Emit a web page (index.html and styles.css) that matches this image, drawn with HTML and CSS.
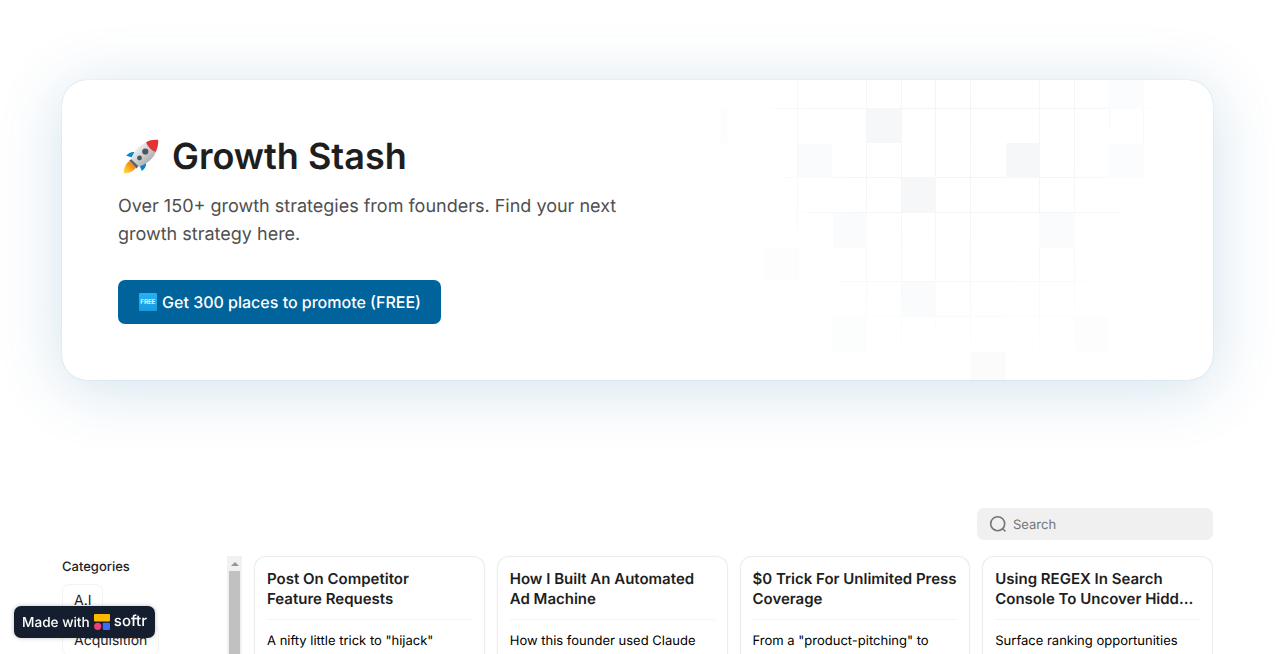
FILE: index.html
```html
<!DOCTYPE html>
<html lang="en">
<head>
<meta charset="utf-8">
<title>Growth Stash</title>
<link rel="stylesheet" href="styles.css">
</head>
<body>
<main class="page">
  <section class="hero">
    <svg class="hero-pattern" width="480" height="300" viewBox="720 80 480 300" aria-hidden="true">
      <defs>
        <radialGradient id="fade" gradientUnits="userSpaceOnUse" cx="960" cy="120" r="250">
          <stop offset="0" stop-color="#fff"/>
          <stop offset=".5" stop-color="#fff" stop-opacity=".8"/>
          <stop offset="1" stop-color="#fff" stop-opacity=".1"/>
        </radialGradient>
        <mask id="lines-mask" maskUnits="userSpaceOnUse" x="720" y="80" width="480" height="300"><rect x="720" y="80" width="480" height="300" fill="url(#fade)"/></mask>
      </defs>
      <path mask="url(#lines-mask)" fill="none" stroke="#f2f3f4" d="M797.5 80v150M866.5 80v250M901.5 80v290M935.5 80v250M970.5 80v300M1039.5 80v290M1074.5 80v250M1109.500 80v50M1143.500 80v80M770 108.500h380M785 177.500h340M803 212.500h320M840 281.500h250M870 316.500h210"/>
      <g>
        <rect x="866" y="108" width="36" height="35" fill="#f5f7f9"/>
        <rect x="901" y="177" width="35" height="36" fill="#f6f7f9"/>
        <rect x="1006" y="143" width="34" height="35" fill="#f6f7f9"/>
        <rect x="798" y="144" width="34" height="34" fill="#fafbfc"/>
        <rect x="833" y="213" width="34" height="35" fill="#fafbfc"/>
        <rect x="1108" y="80" width="36" height="29" fill="#fafcfd"/>
        <rect x="1108" y="144" width="36" height="34" fill="#fbfcfd"/>
        <rect x="1039" y="213" width="36" height="35" fill="#fafbfc"/>
        <rect x="902" y="282" width="34" height="35" fill="#fafbfc"/>
        <rect x="764" y="248" width="35" height="33" fill="#fdfdfd"/>
        <rect x="832" y="316" width="35" height="36" fill="#fcfdfd"/>
        <rect x="1075" y="317" width="33" height="34" fill="#fdfdfd"/>
        <rect x="971" y="352" width="35" height="28" fill="#fbfbfc"/>
        <rect x="720" y="108" width="7" height="35" fill="#fdfdfd"/>
      </g>
    </svg>
    <h1 class="hero-title">
      <svg class="rocket" width="45" height="40" viewBox="118 136 45 40" aria-hidden="true">
        <defs>
          <linearGradient id="hull" x1="0" y1="0" x2="1" y2="1"><stop offset=".2" stop-color="#f4f4f4"/><stop offset=".8" stop-color="#a9a9a9"/></linearGradient>
          <linearGradient id="flame" x1="1" y1="0" x2="0" y2="1"><stop offset="0" stop-color="#e65d16"/><stop offset=".5" stop-color="#f9a21b"/><stop offset="1" stop-color="#ffe14a"/></linearGradient>
        </defs>
        <path d="M136.500 152.300c-4.500-1-8 .4-10.300 3.500l6.200 1.800zM145.500 160.500c1.500 4 .2 8-3.700 10.500l-2.600-6.200z" fill="#0d83c9"/>
        <path d="M129.500 161c-3 1.500-6 7-5.700 12.200 5 .1 10-2 12-5.500z" fill="url(#flame)"/>
        <path d="M129.300 160.500l3-2 7 6.500-2.800 3.500z" fill="#56636b"/>
        <path d="M131 159c2.500-8 8.500-14 15.500-16.800l9.500 9.300c-2.500 7-9 12.500-17 15.300z" fill="url(#hull)"/>
        <path d="M146.200 142.200c3.500-1.800 7.500-2.700 12-2.200.2 4.500-.6 8.200-2.600 12-3.800-1.500-8.400-5.600-9.400-9.800z" fill="#e23237"/>
        <circle cx="145.300" cy="151.500" r="3.100" fill="#455a64"/>
        <circle cx="139.500" cy="158" r="2.400" fill="#455a64"/>
      </svg>
      <span>Growth Stash</span>
    </h1>
    <p class="hero-text">Over 150+ growth strategies from founders. Find your next growth strategy here.</p>
    <a class="hero-button"><span class="free-tag">FREE</span>Get 300 places to promote (FREE)</a>
  </section>

  <section class="library">
    <div class="toolbar">
      <label class="search">
        <svg width="18" height="18" viewBox="0 0 18 18" fill="none" stroke="#757575" stroke-width="1.600" stroke-linecap="round" aria-hidden="true"><circle cx="8.700" cy="8.700" r="7"/><path d="M13.800 13.800l2.200 2.200"/></svg>
        <span class="search-hint">Search</span>
      </label>
    </div>
    <div class="columns">
      <aside class="sidebar">
        <div class="filters">
          <h2 class="filters-title">Categories</h2>
          <span class="chip">A.I</span>
          <span class="chip">Acquisition</span>
        </div>
        <div class="scrollbar"><span class="scroll-up"></span><span class="scroll-thumb"></span></div>
      </aside>
      <div class="cards">
        <article class="card"><h3>Post On Competitor<br>Feature Requests</h3><p>A nifty little trick to "hijack"</p></article>
        <article class="card"><h3>How I Built An Automated Ad Machine</h3><p>How this founder used Claude</p></article>
        <article class="card"><h3>$0 Trick For Unlimited Press Coverage</h3><p>From a "product-pitching" to</p></article>
        <article class="card"><h3>Using REGEX In Search<br>Console To Uncover Hidd…</h3><p>Surface ranking opportunities</p></article>
      </div>
    </div>
  </section>
</main>
<a class="badge">
  <span class="badge-made">Made with</span>
  <svg width="16" height="16" viewBox="0 0 16 16" aria-hidden="true"><rect width="16" height="7.400" rx="1" fill="#ffb800"/><circle cx="3.700" cy="12.300" r="3.600" fill="#ef3e7a"/><rect x="8.800" y="8.700" width="7.200" height="7.200" rx="1" fill="#3b6df0"/></svg>
  <span class="badge-brand">softr</span>
</a>
</body>
</html>
```

FILE: styles.css
```css
* { box-sizing: border-box; }

body {
  margin: 0;
  height: 654px;
  overflow: hidden;
  background: #fff;
  color: #1e1e1e;
  font-family: Inter, "Liberation Sans", sans-serif;
  text-rendering: geometricPrecision;
}

h1, h2, h3, p { margin: 0; }

.page {
  width: 1151px;
  height: 654px;
  margin-left: 62px;
  padding-top: 80px;
  display: flex;
  flex-direction: column;
}

.hero {
  position: relative;
  flex: none;
  height: 300px;
  padding: 56px;
  border-radius: 25px;
  background: #fff;
  box-shadow: 0 0 1px rgba(0, 101, 158, .35), 0 8px 64px rgba(0, 101, 158, .19);
}

.hero-pattern {
  position: absolute;
  top: 0;
  left: 658px;
}

.hero-title {
  display: flex;
  gap: 9px;
  height: 42px;
  font-size: 36px;
  font-weight: 600;
  line-height: 41px;
  white-space: nowrap;
}

.rocket { flex: none; }

.hero-text {
  width: 520px;
  margin-top: 15px;
  font-size: 18px;
  line-height: 28px;
  color: #4f4f4f;
}

.hero-button {
  display: flex;
  align-items: center;
  width: 323px;
  height: 44px;
  margin-top: 31px;
  padding: 0 20px 0 21px;
  border-radius: 7px;
  background: #00639b;
  color: #fff;
  font-size: 16px;
  font-weight: 500;
  white-space: nowrap;
}

.free-tag {
  width: 18px;
  height: 18px;
  margin-right: 5.5px;
  border-radius: 1px;
  background: linear-gradient(#29b0f2, #169bdf);
  font-size: 6.6px;
  font-weight: 500;
  letter-spacing: -.3px;
  line-height: 19px;
  text-align: center;
}

.library {
  flex: 1;
  min-height: 0;
  padding-top: 128px;
  overflow: hidden;
}

.toolbar {
  display: flex;
  justify-content: flex-end;
}

.search {
  display: flex;
  align-items: center;
  gap: 6px;
  width: 236px;
  height: 32px;
  padding-left: 12px;
  border-radius: 7px;
  background: #f0f0f0;
  color: #757575;
  font-size: 13px;
}

.search-hint { padding-top: 2px; }

.columns {
  display: flex;
  gap: 12px;
  height: 98px;
  margin-top: 16px;
}

.sidebar {
  display: flex;
  width: 180px;
}

.filters {
  display: flex;
  flex: 1;
  flex-direction: column;
  align-items: flex-start;
  gap: 8px;
}

.filters-title {
  flex: none;
  height: 20px;
  font-size: 13px;
  font-weight: 500;
  line-height: 22px;
}

.chip {
  flex: none;
  height: 32px;
  padding: 0 11px;
  border: 1px solid #f3f3f3;
  border-radius: 7px;
  font-size: 14px;
  line-height: 32px;
}

.scrollbar {
  display: flex;
  flex-direction: column;
  align-items: center;
  width: 15px;
  background: #f1f1f1;
}

.scroll-up {
  height: 10px;
  margin-bottom: 5px;
  border: 4px solid transparent;
  border-top-width: 6px;
  border-bottom: 4px solid #959595;
}

.scroll-thumb {
  flex: 1;
  width: 11px;
  background: #c1c1c1;
}

.cards {
  display: grid;
  flex: 1;
  grid-template-columns: repeat(4, 1fr);
  gap: 12px;
}

.card {
  padding: 12px 12px 0;
  border: 1px solid #ececec;
  border-bottom: 0;
  border-radius: 12px 12px 0 0;
  box-shadow: 0 0 2px rgba(0, 0, 0, .06);
}

.card h3 {
  height: 51px;
  border-bottom: 1px solid #f4f4f4;
  font-size: 15px;
  font-weight: 600;
  line-height: 20px;
}

.card p {
  margin-top: 11px;
  color: #000;
  font-size: 13px;
  line-height: 20px;
  white-space: nowrap;
}

.badge {
  position: fixed;
  top: 606px;
  left: 14px;
  display: flex;
  align-items: center;
  gap: 4px;
  width: 141px;
  height: 32px;
  padding: 0 8px;
  border-radius: 7px;
  background: #151e2e;
  box-shadow: 0 0 4px rgba(0, 0, 0, .25);
  color: #fff;
  font-size: 14px;
  font-weight: 500;
  white-space: nowrap;
}

.badge svg { flex: none; }

.badge-made {
  width: 68px;
  padding-top: 1px;
  font-size: 13.6px;
}

.badge-brand {
  margin-top: -3px;
  font-size: 15px;
}
```
